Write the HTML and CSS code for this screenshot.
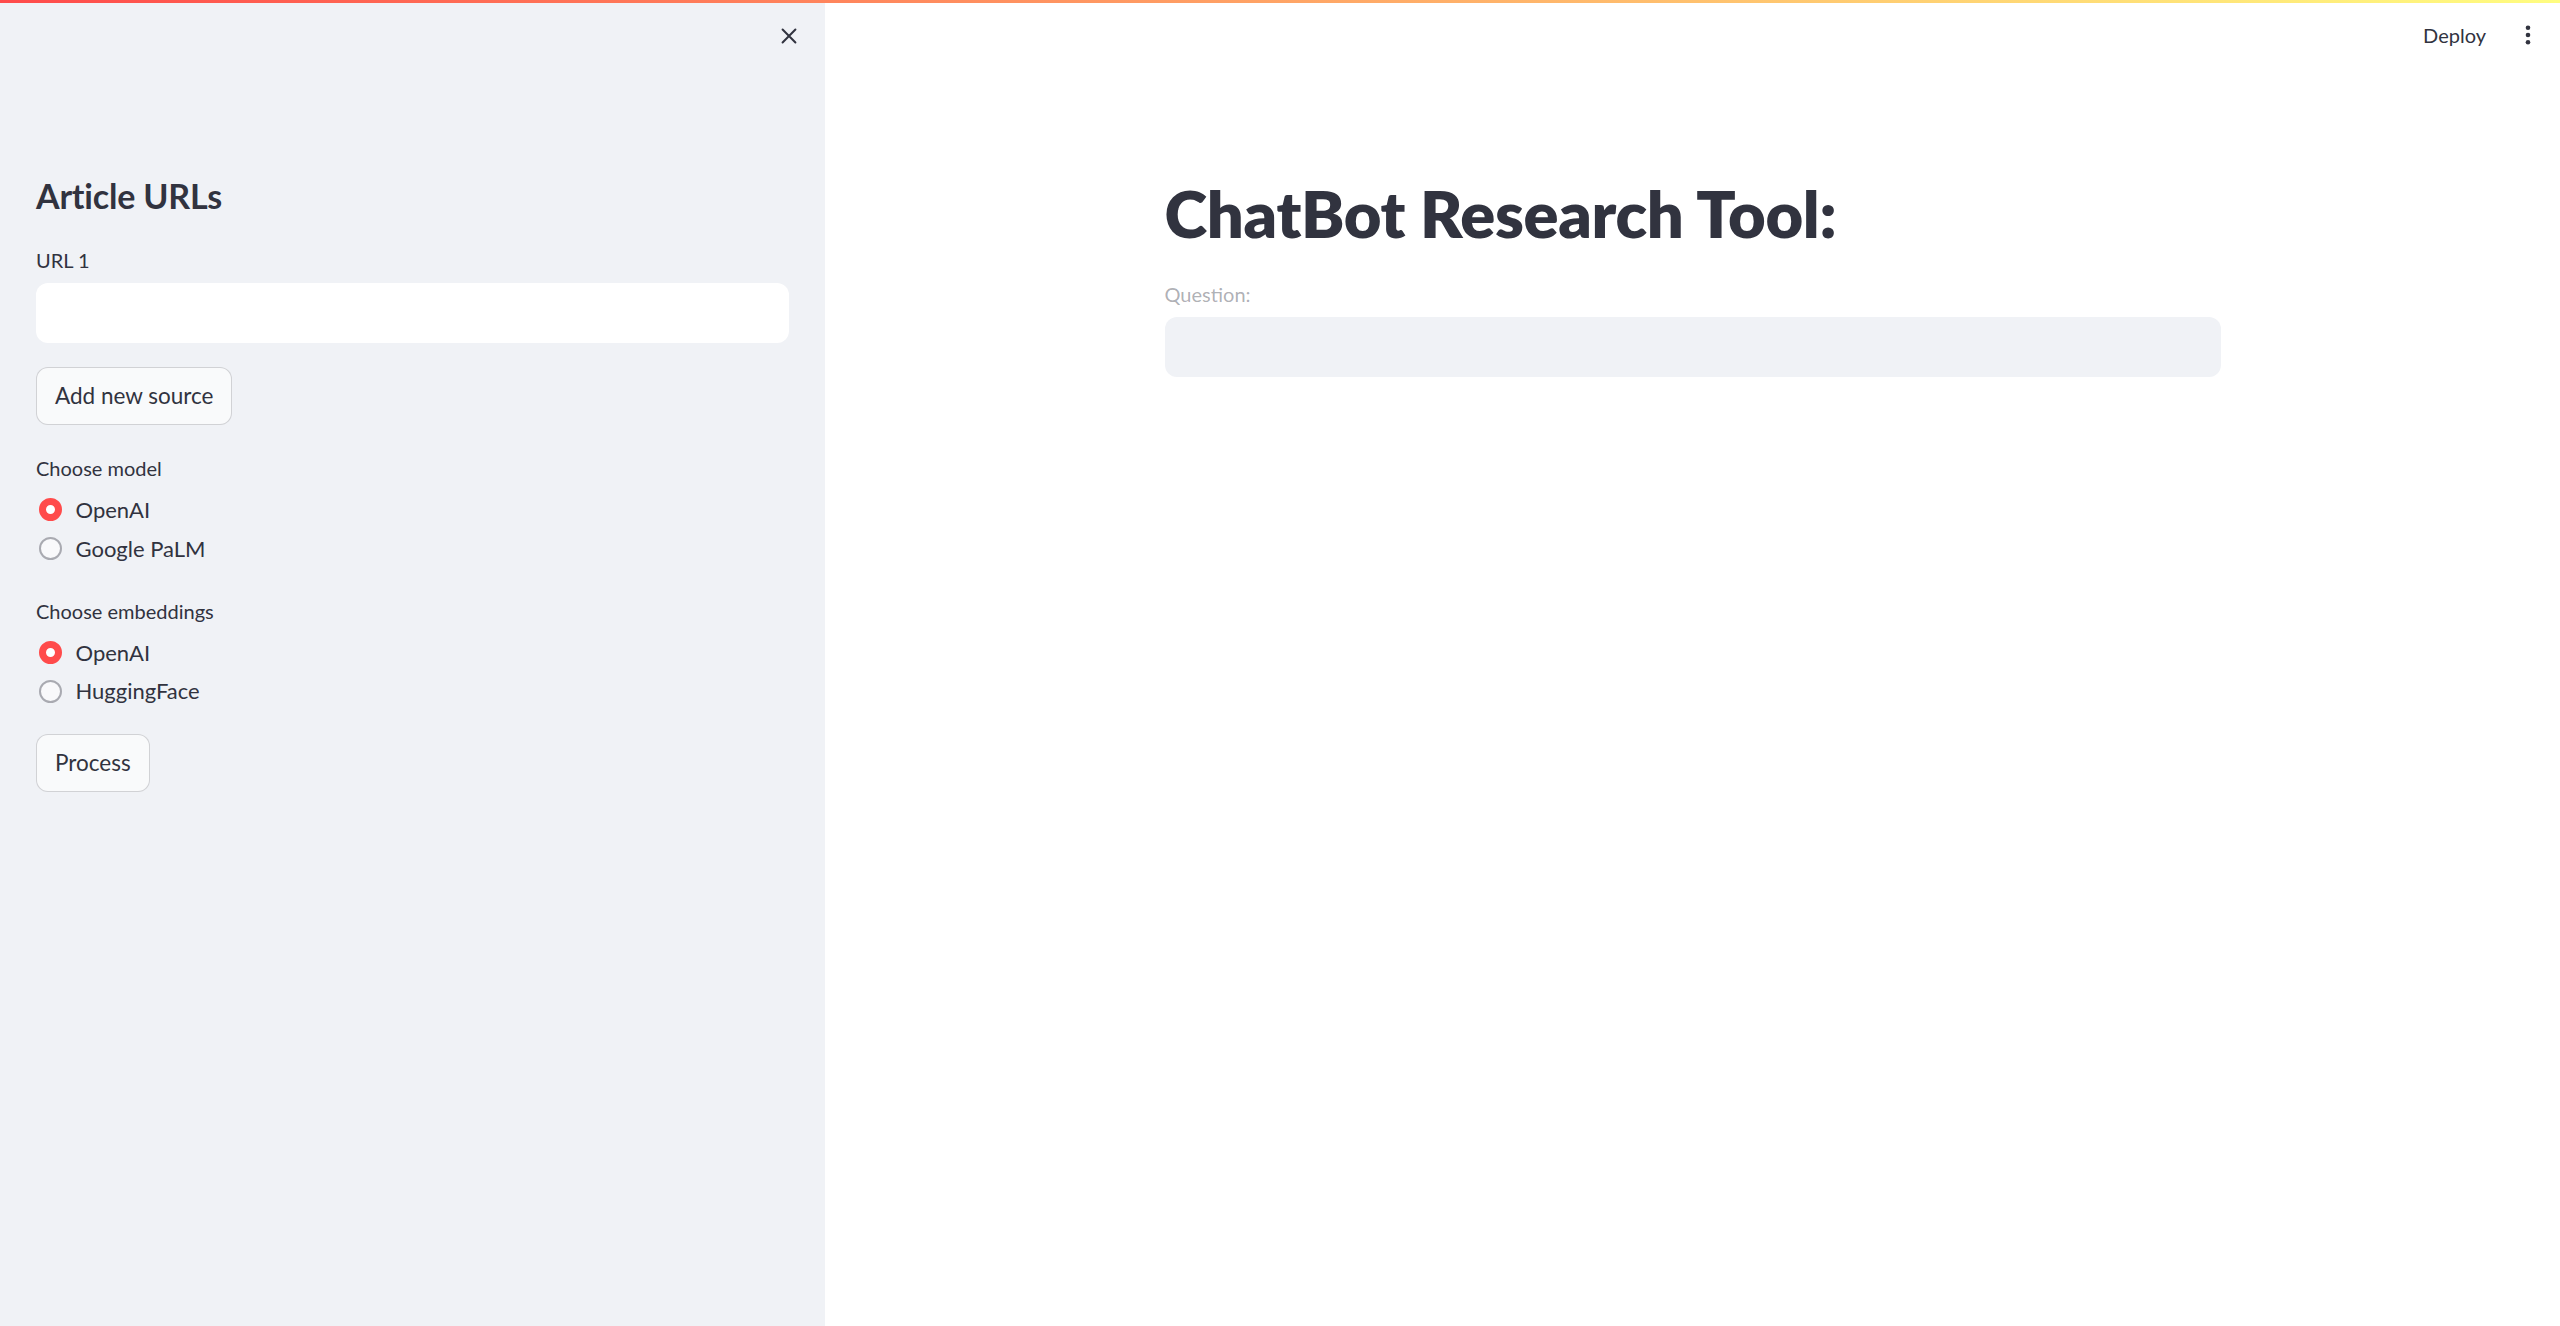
FILE: index.html
```html
<!DOCTYPE html>
<html lang="en">
<head>
<meta charset="utf-8">
<title>ChatBot Research Tool</title>
<link rel="stylesheet" href="styles.css">
</head>
<body>
<div class="decoration"></div>
<div class="app">
  <aside class="sidebar">
    <div class="sidebar-head">
      <button class="icon-btn close-btn" aria-label="Close sidebar">
        <svg width="24" height="24" viewBox="0 0 24 24"><path d="M5 5 L19 19 M19 5 L5 19" stroke="#31333f" stroke-width="2.2" stroke-linecap="round" fill="none"/></svg>
      </button>
    </div>
    <div class="sidebar-content">
      <h2 class="side-title">Article URLs</h2>
      <div class="field">
        <div class="label">URL 1</div>
        <div class="input input-white"></div>
      </div>
      <div><button class="btn">Add new source</button></div>
      <div class="field">
        <div class="label">Choose model</div>
        <div class="radio-opt"><span class="radio on"></span><span class="radio-text">OpenAI</span></div>
        <div class="radio-opt"><span class="radio"></span><span class="radio-text">Google PaLM</span></div>
      </div>
      <div class="field">
        <div class="label">Choose embeddings</div>
        <div class="radio-opt"><span class="radio on"></span><span class="radio-text">OpenAI</span></div>
        <div class="radio-opt"><span class="radio"></span><span class="radio-text">HuggingFace</span></div>
      </div>
      <div><button class="btn">Process</button></div>
    </div>
  </aside>
  <main class="main">
    <header class="topbar">
      <button class="deploy">Deploy</button>
      <button class="icon-btn kebab" aria-label="Main menu">
        <svg width="24" height="24" viewBox="0 0 24 24"><circle cx="12" cy="4.8" r="2.3" fill="#31333f"/><circle cx="12" cy="12" r="2.3" fill="#31333f"/><circle cx="12" cy="19.2" r="2.3" fill="#31333f"/></svg>
      </button>
    </header>
    <div class="block">
      <h1 class="title">ChatBot Research Tool:</h1>
      <div class="field">
        <div class="label label-faded">Question:</div>
        <div class="input input-gray"></div>
      </div>
    </div>
  </main>
</div>
</body>
</html>
```

FILE: styles.css
```css
* { box-sizing: border-box; }
html, body { margin: 0; padding: 0; height: 100%; }
body {
  font-family: "Lato", "Noto Sans", sans-serif;
  color: #31333f;
  background: #ffffff;
  overflow: hidden;
}
.decoration {
  position: absolute;
  top: 0; left: 0; right: 0;
  height: 3px;
  background: linear-gradient(90deg, #ff4b4b, #fffd80);
  z-index: 10;
}
.app { display: flex; height: 100vh; }
.sidebar {
  width: 825px;
  flex: none;
  background: #f0f2f6;
  display: flex;
  flex-direction: column;
}
.sidebar-head {
  height: 144px;
  display: flex;
  justify-content: flex-end;
  align-items: flex-start;
  padding: 24px 24px 0 0;
}
.icon-btn {
  border: none;
  background: transparent;
  padding: 0;
  width: 24px;
  height: 24px;
  display: flex;
  align-items: center;
  justify-content: center;
  cursor: pointer;
}
.close-btn svg { width: 22px; height: 22px; }
.sidebar-content {
  padding: 0 36px;
  display: flex;
  flex-direction: column;
  gap: 24px;
}
.side-title {
  margin: 0;
  padding-top: 30px;
  font-size: 34px;
  line-height: 43.2px;
  font-weight: 700;
  letter-spacing: -0.2px;
}
.field { display: flex; flex-direction: column; }
.label {
  min-height: 36px;
  margin-bottom: 6px;
  padding-top: 3px;
  font-size: 20px;
  line-height: 33px;
}
.label-faded { color: rgba(49, 51, 63, 0.4); }
.input {
  height: 60px;
  border-radius: 12px;
  border: 1px solid transparent;
}
.input-white { background: #ffffff; }
.input-gray { background: #f0f2f6; }
.btn {
  font-family: inherit;
  color: #31333f;
  font-size: 22.5px;
  line-height: 1.6;
  min-height: 57.6px;
  padding: 6px 18px;
  border-radius: 12px;
  border: 1px solid rgba(49, 51, 63, 0.2);
  background: #f9fafb;
}
.radio-opt {
  height: 38.4px;
  display: flex;
  align-items: center;
}
.radio {
  width: 23px;
  height: 23px;
  margin-left: 2.5px;
  margin-right: 14px;
  border-radius: 50%;
  border: 2px solid #a9aab1;
  background: #f9f9fb;
  flex: none;
}
.radio.on {
  border: 7px solid #ff4b4b;
  background: #ffffff;
}
.radio-text { font-size: 22px; line-height: 38.4px; padding-top: 1px; }
.main {
  flex: 1;
  display: flex;
  flex-direction: column;
}
.topbar {
  height: 69px;
  display: flex;
  justify-content: flex-end;
  align-items: center;
  padding-right: 20px;
  gap: 18px;
}
.deploy {
  font-family: inherit;
  font-size: 20px;
  color: #31333f;
  border: none;
  background: transparent;
  padding: 0 12px;
  height: 48px;
}
.kebab { width: 24px; height: 24px; }
.block {
  width: 1056px;
  margin: 0 auto;
  padding-top: 75px;
}
.title {
  margin: 0;
  padding: 30px 0 22px;
  font-size: 65px;
  line-height: 79.2px;
  font-weight: 800;
  letter-spacing: -0.3px;
}
```
